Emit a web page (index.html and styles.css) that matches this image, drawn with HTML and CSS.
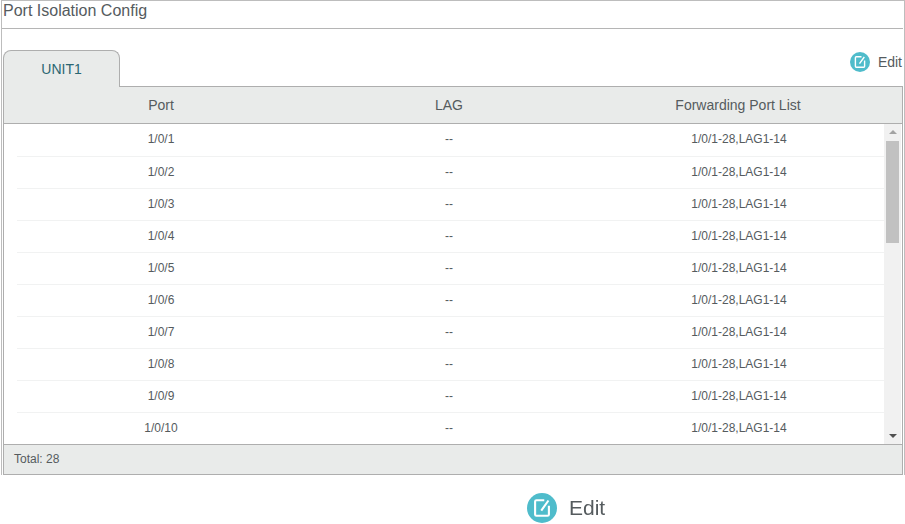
FILE: index.html
```html
<!DOCTYPE html>
<html lang="en">
<head>
<meta charset="utf-8">
<title>Port Isolation Config</title>
<link rel="stylesheet" href="styles.css">
</head>
<body>
<main class="frame">
  <h1 class="title">Port Isolation Config</h1>
  <div class="tabbar">
    <div class="tab">UNIT1</div>
    <a class="edit">
      <svg class="edit-icon" viewBox="0 0 20 20"><circle cx="10" cy="10" r="10" fill="#4fbccb"/><path d="M11.500 4.800H6.300Q5.400 4.800 5.400 5.700V14.300Q5.400 15.200 6.300 15.200H13.700Q14.600 15.200 14.600 14.300V8.500M9.500 11.700L14.300 5" fill="none" stroke="#fff" stroke-width="1.400"/></svg>
      <span>Edit</span>
    </a>
  </div>
  <section class="grid">
    <div class="head">
      <div>Port</div><div>LAG</div><div>Forwarding Port List</div>
    </div>
    <div class="body">
      <div class="rows">
        <div class="row first"><div>1/0/1</div><div>--</div><div>1/0/1-28,LAG1-14</div></div>
        <div class="row"><div>1/0/2</div><div>--</div><div>1/0/1-28,LAG1-14</div></div>
        <div class="row"><div>1/0/3</div><div>--</div><div>1/0/1-28,LAG1-14</div></div>
        <div class="row"><div>1/0/4</div><div>--</div><div>1/0/1-28,LAG1-14</div></div>
        <div class="row"><div>1/0/5</div><div>--</div><div>1/0/1-28,LAG1-14</div></div>
        <div class="row"><div>1/0/6</div><div>--</div><div>1/0/1-28,LAG1-14</div></div>
        <div class="row"><div>1/0/7</div><div>--</div><div>1/0/1-28,LAG1-14</div></div>
        <div class="row"><div>1/0/8</div><div>--</div><div>1/0/1-28,LAG1-14</div></div>
        <div class="row"><div>1/0/9</div><div>--</div><div>1/0/1-28,LAG1-14</div></div>
        <div class="row last"><div>1/0/10</div><div>--</div><div>1/0/1-28,LAG1-14</div></div>
      </div>
      <div class="scrollbar">
        <span class="arrow up"></span>
        <span class="thumb"></span>
        <span class="arrow down"></span>
      </div>
    </div>
    <div class="foot">Total: 28</div>
  </section>
</main>
<div class="zoomed">
  <svg class="zoomed-icon" viewBox="0 0 20 20"><circle cx="10" cy="10" r="10" fill="#4fbccb"/><path d="M11.500 4.800H6.300Q5.400 4.800 5.400 5.700V14.300Q5.400 15.200 6.300 15.200H13.700Q14.600 15.200 14.600 14.300V8.500M9.500 11.700L14.300 5" fill="none" stroke="#fff" stroke-width="1.400"/></svg>
  <span>Edit</span>
</div>
</body>
</html>
```
FILE: styles.css
```css
* { box-sizing: border-box; }
html, body { margin: 0; padding: 0; background: #fff; }
body { font-family: "Liberation Sans", Arial, sans-serif; color: #555b5e; width: 905px; height: 524px; overflow: hidden; }
.frame { margin-left: 1px; width: 904px; height: 475px; border-top: 1px solid #bdbdbd; border-left: 1px solid #bdbdbd; border-right: 1px solid #bdbdbd; padding-left: 1px; }
.title { margin: 0 1px 0 -1px; height: 28px; border-bottom: 1px solid #b5b5b5; font-weight: normal; font-size: 16px; line-height: 19px; padding-left: 1px; color: #555b5e; }
.tabbar { height: 57px; display: flex; justify-content: space-between; align-items: flex-end; position: relative; padding-right: 2px; }
.tab { width: 117px; height: 37px; border: 1px solid #aeaeae; border-bottom: 0; border-radius: 8px 8px 0 0; background: #e9ebea; color: #2b6672; font-size: 14px; line-height: 36px; text-align: center; position: relative; top: 1px; }
.edit { align-self: flex-start; margin-top: 23px; display: flex; align-items: center; gap: 8px; font-size: 14px; color: #555b5e; }
.edit-icon { width: 20px; height: 20px; display: block; }
.grid { width: 900px; height: 389px; border: 1px solid #aeaeae; display: flex; flex-direction: column; }
.head { height: 37px; flex: none; background: #e9ebea; border-bottom: 1px solid #aeaeae; display: grid; grid-template-columns: 288px 288px 290px; padding-left: 13px; font-size: 14px; line-height: 36px; text-align: center; }
.body { flex: 1; display: flex; min-height: 0; }
.rows { width: 880px; padding-left: 13px; flex: none; font-size: 12px; }
.row { height: 32px; display: grid; grid-template-columns: 288px 288px 292px; border-bottom: 1px solid #f1f2f2; text-align: center; line-height: 31px; }
.row.first { height: 33px; line-height: 30px; }
.row.last { height: 31px; border-bottom: 0; }
.scrollbar { width: 17px; background: #f1f1f1; display: flex; flex-direction: column; align-items: center; position: relative; }
.thumb { position: absolute; top: 17px; left: 2px; width: 13px; height: 102px; background: #c1c1c1; }
.arrow { position: absolute; left: 5px; width: 0; height: 0; border-left: 4px solid transparent; border-right: 4px solid transparent; }
.arrow.up { top: 6px; border-bottom: 4px solid #a3a3a3; }
.arrow.down { bottom: 6px; border-top: 4px solid #505050; }
.foot { height: 30px; flex: none; background: #e9ebea; border-top: 1px solid #aeaeae; font-size: 12px; line-height: 28px; padding-left: 10px; }
.zoomed { display: flex; align-items: center; gap: 12px; margin: 18px 0 0 527px; font-size: 21px; filter: blur(0.5px); color: #555b5e; }
.zoomed-icon { width: 30px; height: 30px; display: block; }
```
